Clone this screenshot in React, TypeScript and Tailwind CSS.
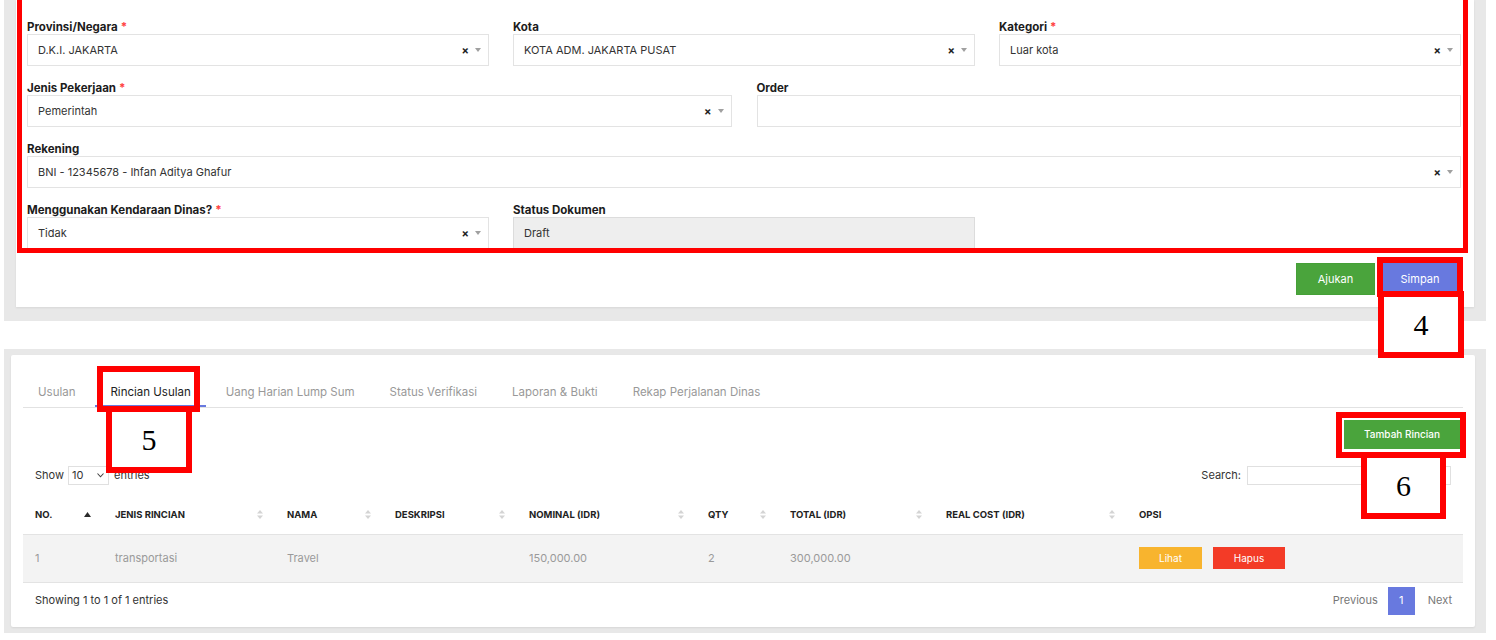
import React from 'react';

const Caret = () => (
  <svg width="6" height="4" viewBox="0 0 6 4">
    <path d="M0 0h6L3 4z" fill="#a0a0a0" />
  </svg>
);

function SelectBox({ value }: { value: string }) {
  return (
    <div className="flex h-[32px] items-center justify-between border border-[#e3e3e3] bg-white pl-[10px] pr-[7px] text-[11px] text-[#333]">
      <span>{value}</span>
      <span className="flex items-center gap-[6px]">
        <span className="text-[11px] font-bold leading-none text-[#222]">×</span>
        <Caret />
      </span>
    </div>
  );
}

function Field({ label, required, children }: { label: string; required?: boolean; children: React.ReactNode }) {
  return (
    <div className="flex flex-col">
      <label className="h-[16px] text-[11.5px] font-bold leading-[19px] text-[#1c1c1c]">
        {label}
        {required && <span className="ml-[3px] text-[#f44]">*</span>}
      </label>
      {children}
    </div>
  );
}

const SortBoth = () => (
  <svg width="6" height="9" viewBox="0 0 6 9">
    <path d="M0 3.5L3 0l3 3.5z" fill="#d4d4d4" />
    <path d="M0 5.5h6L3 9z" fill="#d4d4d4" />
  </svg>
);

const SortUp = () => (
  <svg width="7" height="5" viewBox="0 0 7 5">
    <path d="M0 5L3.5 0 7 5z" fill="#2b2b2b" />
  </svg>
);

const columns = [
  { title: 'NO.', w: 'w-[80px]', sort: 'up' },
  { title: 'JENIS RINCIAN', w: 'w-[172px]', sort: 'both' },
  { title: 'NAMA', w: 'w-[108px]', sort: 'both' },
  { title: 'DESKRIPSI', w: 'w-[134px]', sort: 'both' },
  { title: 'NOMINAL (IDR)', w: 'w-[179px]', sort: 'both' },
  { title: 'QTY', w: 'w-[82px]', sort: 'both' },
  { title: 'TOTAL (IDR)', w: 'w-[156px]', sort: 'both' },
  { title: 'REAL COST (IDR)', w: 'w-[193px]', sort: 'both' },
  { title: 'OPSI', w: 'w-[336px]', sort: 'none' },
];

const tabs = ['Usulan', 'Rincian Usulan', 'Uang Harian Lump Sum', 'Status Verifikasi', 'Laporan & Bukti', 'Rekap Perjalanan Dinas'];

export default function App() {
  return (
    <div className="relative h-[640px] w-[1496px] overflow-hidden bg-white font-[Inter,'Liberation_Sans',sans-serif]">
      {/* TOP PANEL - form */}
      <div className="ml-[4px] w-[1482px] bg-[#e8e8e8] px-[12px] pb-[14px]">
        <div className="bg-white pb-[12px] pl-[11px] pr-[13px] pt-[18px] shadow-[0_1px_2px_rgba(0,0,0,0.08)]">
          <div className="flex flex-col gap-[13px]">
            <div className="grid grid-cols-3 gap-[24px]">
              <Field label="Provinsi/Negara" required>
                <SelectBox value="D.K.I. JAKARTA" />
              </Field>
              <Field label="Kota">
                <SelectBox value="KOTA ADM. JAKARTA PUSAT" />
              </Field>
              <Field label="Kategori" required>
                <SelectBox value="Luar kota" />
              </Field>
            </div>
            <div className="grid grid-cols-2 gap-[25px]">
              <Field label="Jenis Pekerjaan" required>
                <SelectBox value="Pemerintah" />
              </Field>
              <Field label="Order">
                <div className="h-[32px] border border-[#e3e3e3] bg-white" />
              </Field>
            </div>
            <Field label="Rekening">
              <SelectBox value="BNI - 12345678 - Ihfan Aditya Ghafur" />
            </Field>
            <div className="grid grid-cols-3 gap-[24px]">
              <Field label="Menggunakan Kendaraan Dinas?" required>
                <SelectBox value="Tidak" />
              </Field>
              <Field label="Status Dokumen">
                <div className="flex h-[32px] items-center border border-[#dcdcdc] bg-[#eeeeee] pl-[10px] text-[11px] text-[#333]">
                  Draft
                </div>
              </Field>
            </div>
          </div>
          <div className="mt-[14px] flex justify-end gap-[8px] pr-[4px]">
            <button className="h-[32px] w-[79px] border border-[#45a037] bg-[#4aa43c] text-[11px] text-white">Ajukan</button>
            <button className="h-[32px] w-[74px] bg-[#6879df] text-[11px] text-white">Simpan</button>
          </div>
        </div>
      </div>

      {/* BOTTOM PANEL - rincian */}
      <div className="ml-[4px] mt-[28px] w-[1482px] bg-[#e8e8e8] pb-[6px] pl-[7px] pr-[11px] pt-[6px]">
        <div className="rounded-[2px] bg-white px-[12px] pt-[20px] shadow-[0_1px_2px_rgba(0,0,0,0.08)]">
          <div className="flex gap-[5px] border-b border-[#e2e2e2]">
            {tabs.map((t, i) => (
              <div
                key={t}
                className={
                  i === 1
                    ? 'flex h-[32px] items-center border-b-2 border-[#6879df] px-[15px] pt-[6px] text-[11.5px] text-[#222]'
                    : 'flex h-[32px] items-center border-b-2 border-transparent px-[15px] pt-[6px] text-[11.5px] text-[#999]'
                }
              >
                {t}
              </div>
            ))}
          </div>

          <div className="mt-[12px] flex justify-end pr-[3px]">
            <button className="h-[29px] w-[116px] bg-[#4aa43c] text-[10px] font-medium text-white">Tambah Rincian</button>
          </div>

          <div className="mt-[17px] flex items-center justify-between px-[12px] text-[11px] text-[#333]">
            <div className="flex items-center">
              <span>Show</span>
              <div className="ml-[4px] flex h-[19px] w-[41px] items-center justify-between border border-[#e0e0e0] pl-[3px] pr-[4px]">
                <span>10</span>
                <svg width="7" height="5" viewBox="0 0 7 5">
                  <path d="M0.5 0.5L3.5 3.8 6.5 0.5" stroke="#444" strokeWidth="1.1" fill="none" />
                </svg>
              </div>
              <span className="ml-[5px]">entries</span>
            </div>
            <div className="flex items-center">
              <span>Search:</span>
              <div className="ml-[6px] h-[19px] w-[204px] border border-[#e0e0e0]" />
            </div>
          </div>

          <table className="mt-[10px] w-full table-fixed border-collapse">
            <colgroup>
              {columns.map((c) => (
                <col key={c.title} className={c.w} />
              ))}
            </colgroup>
            <thead>
              <tr className="h-[39px] border-b border-[#e3e3e3]">
                {columns.map((c) => (
                  <th key={c.title} className="px-[12px] pt-[1px] text-left text-[9.5px] font-bold text-[#222]">
                    <div className="flex items-center justify-between">
                      <span>{c.title}</span>
                      {c.sort === 'up' && <SortUp />}
                      {c.sort === 'both' && <SortBoth />}
                    </div>
                  </th>
                ))}
              </tr>
            </thead>
            <tbody>
              <tr className="h-[48px] border-b border-[#e3e3e3] bg-[#f3f3f3] text-[11px] text-[#9a9a9a]">
                <td className="px-[12px]">1</td>
                <td className="px-[12px]">transportasi</td>
                <td className="px-[12px]">Travel</td>
                <td className="px-[12px]"></td>
                <td className="px-[12px]">150,000.00</td>
                <td className="px-[12px]">2</td>
                <td className="px-[12px]">300,000.00</td>
                <td className="px-[12px]"></td>
                <td className="px-[12px]">
                  <div className="flex gap-[11px]">
                    <button className="h-[22px] w-[63px] bg-[#f8b42e] text-[10px] text-white">Lihat</button>
                    <button className="h-[22px] w-[72px] bg-[#f33b27] text-[10px] text-white">Hapus</button>
                  </div>
                </td>
              </tr>
            </tbody>
          </table>

          <div className="flex items-center justify-between pb-[12px] pl-[12px] pr-[11px] pt-[4px] text-[11px]">
            <span className="text-[#333]">Showing 1 to 1 of 1 entries</span>
            <div className="flex items-center text-[#777]">
              <span className="mr-[10px]">Previous</span>
              <span className="flex h-[28px] w-[27px] items-center justify-center bg-[#6879df] text-white">1</span>
              <span className="ml-[13px]">Next</span>
            </div>
          </div>
        </div>
      </div>

      {/* red annotations */}
      <div className="absolute left-[17px] top-[-10px] h-[263px] w-[1451px] border-[5px] border-[#ff0000]" />
      <div className="absolute left-[1377px] top-[257px] h-[40px] w-[86px] border-[6px] border-[#ff0000]" />
      <div className="absolute left-[1378px] top-[291px] flex h-[67px] w-[86px] items-center justify-center border-[6px] border-[#ff0000] bg-white font-['Liberation_Serif',serif] text-[30px] text-black">
        4
      </div>
      <div className="absolute left-[97px] top-[366px] h-[46px] w-[103px] border-[6px] border-[#ff0000]" />
      <div className="absolute left-[106px] top-[406px] flex h-[67px] w-[86px] items-center justify-center border-[6px] border-[#ff0000] bg-white font-['Liberation_Serif',serif] text-[30px] text-black">
        5
      </div>
      <div className="absolute left-[1336px] top-[412px] h-[46px] w-[130px] border-[6px] border-[#ff0000]" />
      <div className="absolute left-[1361px] top-[452px] flex h-[67px] w-[85px] items-center justify-center border-[6px] border-[#ff0000] bg-white font-['Liberation_Serif',serif] text-[30px] text-black">
        6
      </div>
    </div>
  );
}
